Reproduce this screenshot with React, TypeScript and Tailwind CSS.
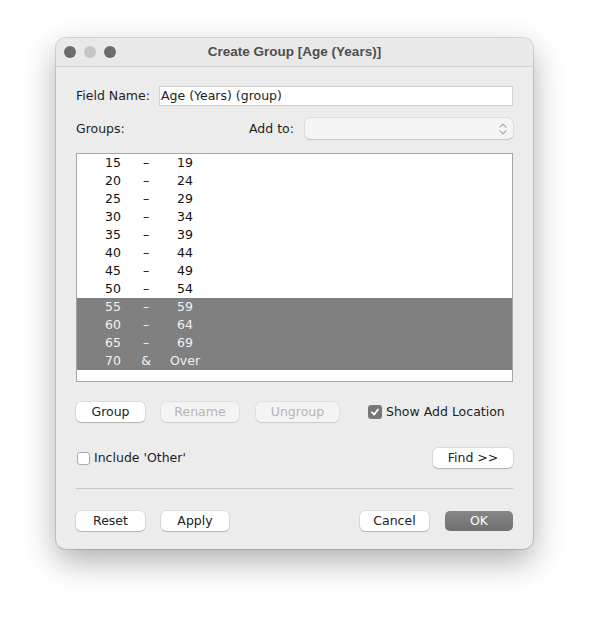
import React from "react";

interface Bin {
  from: string;
  sep: string;
  to: string;
  selected?: boolean;
}

const bins: Bin[] = [
  { from: "15", sep: "–", to: "19" },
  { from: "20", sep: "–", to: "24" },
  { from: "25", sep: "–", to: "29" },
  { from: "30", sep: "–", to: "34" },
  { from: "35", sep: "–", to: "39" },
  { from: "40", sep: "–", to: "44" },
  { from: "45", sep: "–", to: "49" },
  { from: "50", sep: "–", to: "54" },
  { from: "55", sep: "–", to: "59", selected: true },
  { from: "60", sep: "–", to: "64", selected: true },
  { from: "65", sep: "–", to: "69", selected: true },
  { from: "70", sep: "&", to: "Over", selected: true },
];

const Btn: React.FC<{ label: string; w: string; disabled?: boolean; primary?: boolean }> = ({
  label,
  w,
  disabled,
  primary,
}) => {
  if (primary) {
    return (
      <button className={`${w} h-[20px] rounded-[5px] bg-gradient-to-b from-[#878787] to-[#6f6f6f] text-[12.5px] text-white leading-none pt-[1px]`}>
        {label}
      </button>
    );
  }
  return (
    <button
      className={`${w} h-[20px] rounded-[5px] text-[12.5px] leading-none pt-[1px] ${
        disabled
          ? "bg-[#f4f4f4] text-[#b4b4b4] shadow-[0_0_0_0.5px_rgba(0,0,0,0.08),0_0.5px_1px_rgba(0,0,0,0.1)]"
          : "bg-white text-[#222] shadow-[0_0_0_0.5px_rgba(0,0,0,0.15),0_1px_1px_rgba(0,0,0,0.18)]"
      }`}
    >
      {label}
    </button>
  );
};

export default function App() {
  return (
    <div
      className="min-h-[624px] bg-white pt-[38px] pl-[56px]"
      style={{ fontFamily: '"DejaVu Sans", "Liberation Sans", sans-serif' }}
    >
      <div className="w-[477px] h-[511px] rounded-[10px] bg-[#ececec] flex flex-col shadow-[0_0_0_1px_rgba(0,0,0,0.12),0_12px_32px_rgba(0,0,0,0.32)] overflow-hidden">
        {/* title bar */}
        <div className="h-[29px] flex items-center border-b border-[#d2d2d2] bg-[#e9e9e9] relative">
          <div className="flex gap-[8px] pl-[8px]">
            <span className="w-[12px] h-[12px] rounded-full bg-[#6d6d6d]" />
            <span className="w-[12px] h-[12px] rounded-full bg-[#c6c6c6]" />
            <span className="w-[12px] h-[12px] rounded-full bg-[#6d6d6d]" />
          </div>
          <div
            className="absolute inset-0 flex items-center justify-center text-[13.5px] font-bold text-[#4e4e4e]"
            style={{ fontFamily: '"Liberation Sans", Arial, sans-serif' }}
          >
            Create Group [Age (Years)]
          </div>
        </div>

        <div className="flex flex-col px-[20px] text-[12.5px] text-[#1e1e1e]">
          {/* field name */}
          <div className="mt-[19px] h-[20px] flex items-center">
            <span className="w-[83px] pt-[1px]">Field Name:</span>
            <div className="flex-1 h-[20px] bg-white border border-[#cfcfcf] flex items-center pl-[1px] pt-[1px] text-[12.5px]">
              Age (Years) (group)
            </div>
          </div>

          {/* groups / add to */}
          <div className="mt-[12px] h-[21px] flex items-center">
            <span className="w-[173px] pt-[1px]">Groups:</span>
            <span className="w-[56px] pt-[1px]">Add to:</span>
            <div className="flex-1 h-[21px] rounded-[5px] bg-[#f4f4f4] shadow-[0_0_0_0.5px_rgba(0,0,0,0.1),0_0.5px_1px_rgba(0,0,0,0.12)] flex items-center justify-end pr-[6px]">
              <svg width="8" height="12" viewBox="0 0 8 12" fill="none" stroke="#a8a8a8" strokeWidth="1.2" strokeLinecap="round" strokeLinejoin="round">
                <path d="M1 4.2 L4 1.2 L7 4.2" />
                <path d="M1 7.8 L4 10.8 L7 7.8" />
              </svg>
            </div>
          </div>

          {/* group list */}
          <div className="mt-[14px] h-[229px] bg-white border border-[#a5a5a5]">
            {bins.map((b) => (
              <div
                key={b.from}
                className={`h-[18px] flex items-center pl-[18px] pt-[1px] text-[12.5px] ${
                  b.selected ? "bg-[#808080] text-[#f2f2f2]" : "text-[#111]"
                }`}
              >
                <span className="w-[36px] text-center">{b.from}</span>
                <span className="w-[30px] text-center">{b.sep}</span>
                <span className="w-[46px] text-center pl-[2px]">{b.to}</span>
              </div>
            ))}
          </div>

          {/* actions */}
          <div className="mt-[20px] h-[20px] flex items-center">
            <Btn label="Group" w="w-[69px]" />
            <div className="w-[16px]" />
            <Btn label="Rename" w="w-[78px]" disabled />
            <div className="w-[17px]" />
            <Btn label="Ungroup" w="w-[83px]" disabled />
            <div className="w-[29px]" />
            <span className="w-[14px] h-[14px] rounded-[3px] bg-[#777] flex items-center justify-center">
              <svg width="10" height="10" viewBox="0 0 10 10" fill="none" stroke="white" strokeWidth="1.8" strokeLinecap="round" strokeLinejoin="round">
                <path d="M2 5.3 L4.2 7.5 L8 2.5" />
              </svg>
            </span>
            <span className="ml-[4px] pt-[1px]">Show Add Location</span>
          </div>

          <div className="mt-[26px] h-[20px] flex items-center">
            <span className="ml-[1px] w-[13px] h-[13px] rounded-[3px] bg-white border border-[#a8a8a8]" />
            <span className="ml-[4px] pt-[1px]">Include 'Other'</span>
            <div className="flex-1" />
            <Btn label="Find >>" w="w-[80px]" />
          </div>

          <div className="mt-[20px] h-px bg-[#c6c6c6]" />

          <div className="mt-[22px] h-[20px] flex items-center">
            <Btn label="Reset" w="w-[69px]" />
            <div className="w-[16px]" />
            <Btn label="Apply" w="w-[68px]" />
            <div className="flex-1" />
            <Btn label="Cancel" w="w-[69px]" />
            <div className="w-[16px]" />
            <Btn label="OK" w="w-[68px]" primary />
          </div>
        </div>
      </div>
    </div>
  );
}
